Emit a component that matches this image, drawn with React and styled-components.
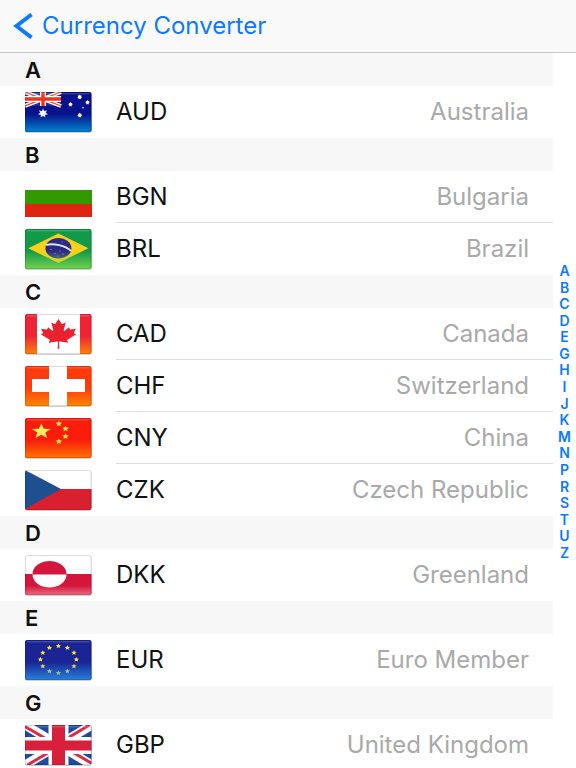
import React from 'react';
import styled, { createGlobalStyle } from 'styled-components';

const GlobalStyle = createGlobalStyle`
  * {
    box-sizing: border-box;
  }

  body {
    margin: 0;
    background: #fff;
    font-family: Inter, 'Liberation Sans', sans-serif;
  }
`;

const Screen = styled.div`
  display: flex;
  flex-direction: column;
  height: 100vh;
`;

const NavBar = styled.header`
  display: flex;
  align-items: center;
  flex: none;
  height: 53px;
  padding: 0 13px;
  background: #f9f9f9;
  border-bottom: 1px solid #c8c8ca;
`;

const BackButton = styled.button`
  display: flex;
  align-items: center;
  gap: 9px;
  padding: 0;
  border: 0;
  background: none;
  color: #0a7aff;
  font: inherit;
  font-size: 24px;
  line-height: 28px;
  cursor: pointer;
`;

const Content = styled.div`
  display: flex;
  flex: 1;
  min-height: 0;
`;

const CurrencyList = styled.main`
  flex: 1;
  overflow-y: auto;
  scrollbar-width: none;
`;

const SectionTitle = styled.h2`
  margin: 0;
  padding: 2px 0 0 25px;
  background: #f7f7f7;
  color: #111;
  font-size: 22px;
  font-weight: 600;
  line-height: 31px;
`;

const Rows = styled.ul`
  margin: 0;
  padding: 0;
  list-style: none;
`;

const Row = styled.button`
  display: flex;
  align-items: center;
  width: 100%;
  height: 52px;
  padding: 0 0 0 25px;
  border: 0;
  background: #fff;
  font: inherit;
  font-size: 24px;
  line-height: 28px;
  text-align: left;
  cursor: pointer;
`;

const RowText = styled.span`
  display: flex;
  align-items: center;
  justify-content: space-between;
  flex: 1;
  height: 100%;
  margin-left: 24px;
  padding-right: 24px;
  border-bottom: 1px solid ${({ $last }) => ($last ? 'transparent' : '#dcdcde')};
`;

const Code = styled.span`
  color: #111;
`;

const Country = styled.span`
  color: #a9a9a9;
`;

const IndexBar = styled.nav`
  display: flex;
  align-items: center;
  justify-content: center;
  flex: none;
  width: 23px;
  padding-top: 3px;
`;

const IndexLetters = styled.div`
  display: flex;
  flex-direction: column;
  align-items: center;
  justify-content: space-between;
  height: 298px;
`;

const IndexLink = styled.a`
  color: #0a7aff;
  font-size: 14px;
  font-weight: 600;
  line-height: 16px;
  text-decoration: none;
`;

const FlagSvg = styled.svg`
  display: block;
  flex: none;
  overflow: visible;
`;

const Star = ({ x, y, rx, ry = rx, points = 5, inner = 0.42, fill }) => {
  const corners = Array.from({ length: points * 2 }, (_, i) => {
    const r = i % 2 ? inner : 1;
    const angle = (Math.PI * i) / points - Math.PI / 2;
    return `${x + Math.cos(angle) * r * rx},${y + Math.sin(angle) * r * ry}`;
  });
  return <polygon points={corners.join(' ')} fill={fill} />;
};

const UnionJack = () => (
  <>
    <rect width="67" height="40" fill="#1f4aa0" />
    <path d="M0 0L67 40M67 0L0 40" stroke="#fff" strokeWidth="9" />
    <path d="M0 1.5L30 19M67 38.5L37 21M64.5 0L36 17M2.5 40L31 23" stroke="#dc2a48" strokeWidth="3" />
    <path d="M33.5 0V40" stroke="#fff" strokeWidth="20" />
    <path d="M0 20.5H67" stroke="#fff" strokeWidth="17" />
    <path d="M33.5 0V40" stroke="#d8203c" strokeWidth="13" />
    <path d="M0 20.5H67" stroke="#d8203c" strokeWidth="10" />
  </>
);

const flags = {
  AUD: {
    glow: '#00a0e0',
    art: (
      <>
        <rect width="67" height="40" fill="#08128c" />
        <path d="M0 0H36V14H0z" fill="#1c2f9c" />
        <path d="M0 0L36 14M36 0L0 14" stroke="#fff" strokeWidth="4" />
        <path d="M0 0L36 14M36 0L0 14" stroke="#f0452c" strokeWidth="1.3" />
        <path d="M18 0V14M0 7H36" stroke="#fff" strokeWidth="6" />
        <path d="M18 0V14M0 7H36" stroke="#f5301c" strokeWidth="3.4" />
        <Star x={18} y={21.3} rx={5.3} ry={4.8} points={7} inner={0.5} fill="#fff" />
        <Star x={54.7} y={5} rx={2.5} points={7} inner={0.65} fill="#fff" />
        <Star x={45.5} y={12.4} rx={2.3} points={7} inner={0.65} fill="#fff" />
        <Star x={62.5} y={10.4} rx={2.3} points={7} inner={0.65} fill="#fff" />
        <Star x={54.7} y={23.3} rx={2.5} points={7} inner={0.65} fill="#fff" />
        <Star x={58} y={15.7} rx={1.3} fill="#fff" />
      </>
    ),
  },
  BGN: {
    flat: true,
    art: (
      <>
        <rect y="13" width="67" height="14" fill="#339900" />
        <rect y="27" width="67" height="13" fill="#df2410" />
      </>
    ),
  },
  BRL: {
    glow: '#8be04a',
    art: (
      <>
        <rect width="67" height="40" fill="#12994a" />
        <path d="M3.3 19.3L33.4 4.5L63.4 19.3L33.4 34z" fill="#fbd018" />
        <ellipse cx="33.4" cy="19.2" rx="13" ry="10.2" fill="#2c2a86" />
        <path d="M21 15.8C29 14.3 40 16 46 21.8" fill="none" stroke="#dcebf0" strokeWidth="1.8" />
        <g fill="#a9aedb">
          <circle cx="26" cy="20.5" r=".6" />
          <circle cx="30" cy="24.5" r=".6" />
          <circle cx="35" cy="22" r=".6" />
          <circle cx="38" cy="25" r=".6" />
          <circle cx="33" cy="27" r=".5" />
          <circle cx="37" cy="13" r=".5" />
        </g>
      </>
    ),
  },
  CAD: {
    glow: '#ff9a00',
    art: (
      <>
        <rect width="67" height="40" fill="#fff" />
        <path d="M0 0H12V40H0zM55 0H67V40H55z" fill="#ee2436" />
        <path
          transform="translate(33.5 19.7) scale(.0096 .0074)"
          fill="#ea2230"
          d="m-90 2030 45-863a95 95 0 0 0-111-98l-859 151 116-320a65 65 0 0 0-20-73l-941-762 212-99a65 65 0 0 0 34-79l-186-572 542 115a65 65 0 0 0 73-38l105-247 423 454a65 65 0 0 0 111-57l-204-1052 327 189a65 65 0 0 0 91-27l332-652 332 652a65 65 0 0 0 91 27l327-189-204 1052a65 65 0 0 0 111 57l423-454 105 247a65 65 0 0 0 73 38l542-115-186 572a65 65 0 0 0 34 79l212 99-941 762a65 65 0 0 0-20 73l116 320-859-151a95 95 0 0 0-111 98l45 863z"
        />
      </>
    ),
    mask: 'M0 0H12V40H0zM55 0H67V40H55z',
  },
  CHF: {
    glow: '#ff9c00',
    art: (
      <>
        <rect width="67" height="40" fill="#ff3a0c" />
        <path d="M24 0H42V13H60V26H42V40H24V26H7V13H24z" fill="#fff" />
      </>
    ),
    mask: 'M0 0H24V13H7V26H24V40H0zM42 0H67V40H42V26H60V13H42z',
  },
  CNY: {
    glow: '#ff8a00',
    art: (
      <>
        <rect width="67" height="40" fill="#fb1c0c" />
        <Star x={16.3} y={13.5} rx={10} ry={8} fill="#ffee58" />
        <Star x={33.8} y={5.8} rx={3.4} ry={3} inner={0.5} fill="#ffe23c" />
        <Star x={40.5} y={10.8} rx={3.4} ry={3} inner={0.5} fill="#ffe23c" />
        <Star x={40.5} y={18.4} rx={3.4} ry={3} inner={0.5} fill="#ffe23c" />
        <Star x={33.8} y={23.5} rx={3.4} ry={3} inner={0.5} fill="#ffe23c" />
      </>
    ),
  },
  CZK: {
    art: (
      <>
        <rect width="67" height="19" fill="#fff" />
        <rect y="19" width="67" height="21" fill="#d8202e" />
        <path d="M0 0L36 19L0 39z" fill="#1e4f8f" />
      </>
    ),
  },
  DKK: {
    glow: '#f08090',
    art: (
      <>
        <rect width="67" height="19" fill="#fff" />
        <rect y="19" width="67" height="21" fill="#d4163c" />
        <path d="M7.500 19A17 13 0 0 1 41.500 19z" fill="#d4163c" />
        <path d="M7.500 19.500A17 13 0 0 0 41.500 19.500z" fill="#fff" />
      </>
    ),
    mask: 'M0 19H7.500A17 13 0 0 0 41.500 19H67V40H0z',
  },
  EUR: {
    glow: '#2a98ee',
    art: (
      <>
        <rect width="67" height="40" fill="#1a2494" />
        {Array.from({ length: 12 }, (_, i) => (
          <Star
            key={i}
            x={33.4 + Math.sin((i * Math.PI) / 6) * 18}
            y={19.5 - Math.cos((i * Math.PI) / 6) * 13.5}
            rx={2.8}
            ry={2.5}
            inner={0.48}
            fill="#ffe03a"
          />
        ))}
      </>
    ),
  },
  GBP: { art: <UnionJack /> },
};

const Flag = ({ code }) => {
  const { art, glow, mask, flat } = flags[code];
  if (flat) {
    return <FlagSvg width="67" height="40" viewBox="0 0 67 40" aria-hidden="true">{art}</FlagSvg>;
  }
  return (
    <FlagSvg width="67" height="40" viewBox="0 0 67 40" aria-hidden="true">
      <defs>
        <clipPath id={`clip-${code}`}>
          <rect width="66.500" height="40" rx="2" />
        </clipPath>
        <linearGradient id={`glow-${code}`} x2="0" y2="1">
          <stop offset=".55" stopColor={glow} stopOpacity="0" />
          <stop offset="1" stopColor={glow} stopOpacity=".8" />
        </linearGradient>
      </defs>
      <rect y=".8" width="66.500" height="40" rx="2" fill="#000" opacity=".25" />
      <g clipPath={`url(#clip-${code})`}>
        {art}
        {glow && <path d={mask || 'M0 0H67V40H0z'} fill={`url(#glow-${code})`} />}
        <path d="M2 1.800H64.500" stroke="#fff" strokeOpacity=".25" />
      </g>
      <rect x=".5" y=".5" width="65.500" height="39" rx="2" fill="none" stroke="#000" strokeOpacity=".14" />
    </FlagSvg>
  );
};

const sections = [
  { letter: 'A', currencies: [['AUD', 'Australia']] },
  { letter: 'B', currencies: [['BGN', 'Bulgaria'], ['BRL', 'Brazil']] },
  {
    letter: 'C',
    currencies: [
      ['CAD', 'Canada'],
      ['CHF', 'Switzerland'],
      ['CNY', 'China'],
      ['CZK', 'Czech Republic'],
    ],
  },
  { letter: 'D', currencies: [['DKK', 'Greenland']] },
  { letter: 'E', currencies: [['EUR', 'Euro Member']] },
  { letter: 'G', currencies: [['GBP', 'United Kingdom']] },
];

const indexLetters = 'ABCDEGHIJKMNPRSTUZ'.split('');

const App = () => (
  <Screen>
    <GlobalStyle />
    <NavBar>
      <BackButton type="button">
        <svg width="20" height="26" viewBox="0 0 20 26" aria-hidden="true">
          <path d="M18.500 1.500L3.500 13L18.500 24.500" fill="none" stroke="currentColor" strokeWidth="4" />
        </svg>
        Currency Converter
      </BackButton>
    </NavBar>
    <Content>
      <CurrencyList>
        {sections.map(({ letter, currencies }) => (
          <section key={letter} id={letter}>
            <SectionTitle>{letter}</SectionTitle>
            <Rows>
              {currencies.map(([code, country], i) => (
                <li key={code}>
                  <Row type="button">
                    <Flag code={code} />
                    <RowText $last={i === currencies.length - 1}>
                      <Code>{code}</Code>
                      <Country>{country}</Country>
                    </RowText>
                  </Row>
                </li>
              ))}
            </Rows>
          </section>
        ))}
      </CurrencyList>
      <IndexBar>
        <IndexLetters>
          {indexLetters.map(letter => (
            <IndexLink key={letter} href={`#${letter}`}>{letter}</IndexLink>
          ))}
        </IndexLetters>
      </IndexBar>
    </Content>
  </Screen>
);

export default App;
